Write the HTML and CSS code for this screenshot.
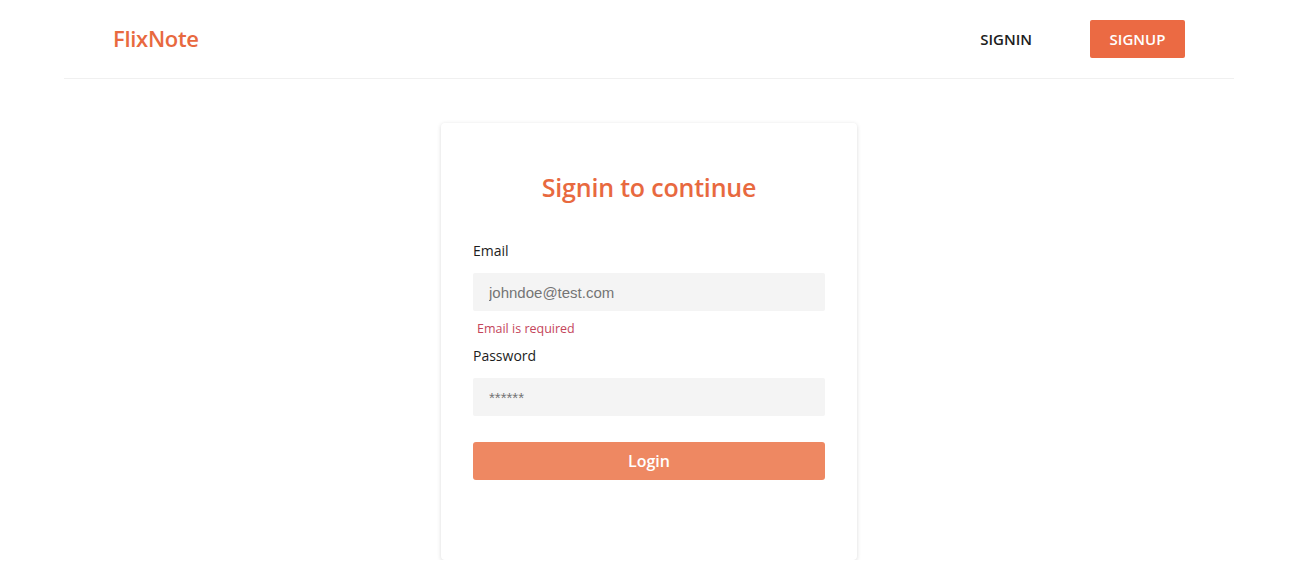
FILE: index.html
```html
<!DOCTYPE html>
<html>
<head>
<meta charset="utf-8">
<link rel="stylesheet" href="styles.css">
</head>
<body>
<header class="container">
  <nav class="nav">
    <a class="logo" href="#">FlixNote</a>
    <div class="nav-links">
      <a class="nav-link" href="#">SIGNIN</a>
      <a class="nav-btn" href="#">SIGNUP</a>
    </div>
  </nav>
</header>
<main class="main">
  <form class="card">
    <h1 class="title">Signin to continue</h1>
    <label class="label">Email</label>
    <input class="input" type="text" placeholder="johndoe@test.com">
    <div class="error">Email is required</div>
    <label class="label">Password</label>
    <input class="input" type="password" placeholder="******">
    <button class="btn" type="button">Login</button>
  </form>
</main>
</body>
</html>
```
FILE: styles.css
```css
* { box-sizing: border-box; }
body {
  margin: 0;
  background: #fff;
  font-family: "Open Sans", "Noto Sans", sans-serif;
  color: #212529;
}
.container {
  width: 1170px;
  margin: 0 auto;
}
.nav {
  height: 79px;
  border-bottom: 1px solid #f0f0f0;
  display: flex;
  align-items: center;
  justify-content: space-between;
  padding: 0 49px;
}
.logo {
  color: #e8693f;
  font-size: 22px;
  font-weight: 600;
  text-decoration: none;
  letter-spacing: -0.3px;
  margin-bottom: 2px;
}
.nav-links {
  display: flex;
  align-items: center;
  gap: 58px;
}
.nav-link {
  color: #1d1d1d;
  font-weight: 600;
  font-size: 15px;
  text-decoration: none;
}
.nav-btn {
  background: #eb6a43;
  color: #fff;
  font-weight: 600;
  font-size: 15px;
  text-decoration: none;
  width: 95px;
  height: 38px;
  display: flex;
  align-items: center;
  justify-content: center;
  border-radius: 2px;
}
.main {
  display: flex;
  justify-content: center;
  padding-top: 44px;
}
.card {
  width: 416px;
  height: 437px;
  background: #fff;
  border-radius: 4px;
  box-shadow: 0 1px 4px rgba(0,0,0,0.15);
  padding: 50px 32px 0;
  display: flex;
  flex-direction: column;
}
.title {
  margin: 0 0 38px;
  text-align: center;
  color: #e8693f;
  font-size: 25px;
  font-weight: 600;
  line-height: 29px;
  letter-spacing: -0.2px;
}
.label {
  font-size: 14px;
  line-height: 21px;
  color: #1d1d1d;
  margin-bottom: 12px;
}
.input {
  height: 38px;
  flex: none;
  border: none;
  background: #f4f4f4;
  border-radius: 2px;
  padding: 0 16px;
  font-family: "Liberation Sans", Arial, sans-serif;
  font-size: 15px;
  color: #333;
  outline: none;
}
.input::placeholder { color: #757575; }
.error {
  color: #c4455b;
  font-size: 12.5px;
  line-height: 18px;
  margin: 9px 0 7px 4px;
}
.btn {
  margin-top: 26px;
  height: 38px;
  flex: none;
  border: none;
  border-radius: 3px;
  background: #ee8862;
  color: #fff;
  font-family: "Open Sans", "Noto Sans", sans-serif;
  font-size: 16px;
  font-weight: 600;
}
```
